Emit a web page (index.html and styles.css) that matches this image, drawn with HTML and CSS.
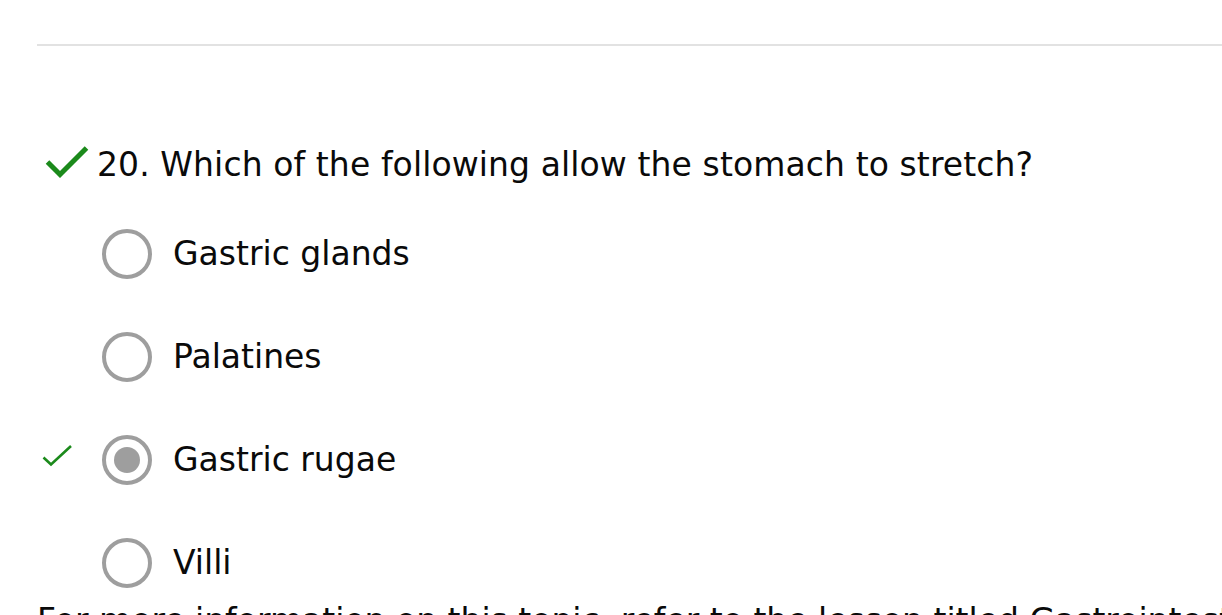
FILE: index.html
```html
<!DOCTYPE html>
<html lang="en">
<head>
<meta charset="utf-8">
<title>Quiz question</title>
<link rel="stylesheet" href="styles.css">
</head>
<body>
<div class="page">
  <div class="rule"></div>
  <div class="question">
    <svg class="q-check" width="44" height="34" viewBox="0 0 44 34" aria-hidden="true">
      <path d="M2.5 17 L15 29.5 L41.5 3" fill="none" stroke="#1b8a1b" stroke-width="5"/>
    </svg>
    <span class="q-text">20. Which of the following allow the stomach to stretch?</span>
  </div>
  <ul class="options">
    <li class="option">
      <span class="mark"></span>
      <span class="radio"></span>
      <span class="label">Gastric glands</span>
    </li>
    <li class="option">
      <span class="mark"></span>
      <span class="radio"></span>
      <span class="label">Palatines</span>
    </li>
    <li class="option">
      <span class="mark">
        <svg class="o-check" width="30" height="22" viewBox="0 0 30 22" aria-hidden="true">
          <path d="M1.5 12.5 L9 19.5 L29 1" fill="none" stroke="#1b8a1b" stroke-width="2.6"/>
        </svg>
      </span>
      <span class="radio selected"></span>
      <span class="label">Gastric rugae</span>
    </li>
    <li class="option">
      <span class="mark"></span>
      <span class="radio"></span>
      <span class="label">Villi</span>
    </li>
  </ul>
  <p class="more">For more information on this topic, refer to the lesson titled Gastrointestinal Tract: Stomach Functions.</p>
</div>
</body>
</html>
```

FILE: styles.css
```css
html, body {
  margin: 0;
  padding: 0;
  background: #ffffff;
}

body {
  font-family: "DejaVu Sans", Verdana, sans-serif;
  font-size: 33px;
  color: #0a0a0a;
  overflow: hidden;
}

.page {
  padding-left: 37px;
}

.rule {
  margin-top: 44px;
  height: 2px;
  background: #e2e2e2;
}

.question {
  display: flex;
  align-items: flex-start;
  margin-top: 99px;
  line-height: 40px;
}

.q-check {
  display: block;
  margin-left: 8px;
  margin-right: 8px;
  margin-top: 0;
  flex: none;
}

.q-text {
  white-space: nowrap;
  letter-spacing: 0.1px;
}

.options {
  list-style: none;
  margin: 44px 0 0 0;
  padding: 0;
  display: flex;
  flex-direction: column;
  gap: 53px;
}

.option {
  display: flex;
  align-items: center;
  height: 50px;
}

.mark {
  width: 65px;
  flex: none;
  align-self: flex-start;
  height: 50px;
}

.o-check {
  display: block;
  margin-left: 5px;
  margin-top: 10px;
}

.radio {
  box-sizing: border-box;
  width: 50px;
  height: 50px;
  border: 4px solid #9e9e9e;
  border-radius: 50%;
  flex: none;
  display: flex;
  align-items: center;
  justify-content: center;
}

.radio.selected::after {
  content: "";
  width: 26px;
  height: 26px;
  border-radius: 50%;
  background: #9e9e9e;
}

.label {
  margin-left: 21px;
  line-height: 40px;
  white-space: nowrap;
}

.more {
  margin: 13px 0 0 0;
  line-height: 40px;
  white-space: nowrap;
}
```
